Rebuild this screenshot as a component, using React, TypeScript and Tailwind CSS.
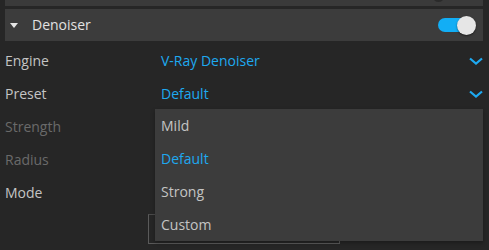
import { useState } from "react";

const rows = [
  { label: "Engine", value: "V-Ray Denoiser", dim: false, chevron: true },
  { label: "Preset", value: "Default", dim: false, chevron: true },
  { label: "Strength", value: "", dim: true, chevron: false },
  { label: "Radius", value: "", dim: true, chevron: false },
  { label: "Mode", value: "", dim: false, chevron: false },
];

const options = ["Mild", "Default", "Strong", "Custom"];

function Chevron() {
  return (
    <svg width="14" height="8" viewBox="0 0 14 8" className="shrink-0">
      <path d="M1 1.5 L7 6.5 L13 1.5" fill="none" stroke="#1ea9f0" strokeWidth="2.2" />
    </svg>
  );
}

export default function App() {
  const [on, setOn] = useState(true);
  const selected = "Default";

  return (
    <div
      className="relative w-[489px] h-[250px] overflow-hidden bg-[#262626] text-[14px] leading-none"
      style={{ fontFamily: '"Open Sans", "Noto Sans", sans-serif' }}
    >
      {/* panel above, mostly scrolled away */}
      <div className="relative mx-[5px] w-[478px] h-[6px] bg-[#3a3a3a]">
        <div className="absolute left-[428px] -top-[9px] w-[11px] h-[11px] rounded-full bg-[#2a2a2a]" />
      </div>

      {/* section header */}
      <div className="mt-[3px] ml-[5px] w-[478px] h-[32px] bg-[#3c3c3c] flex items-center">
        <svg width="8" height="5" viewBox="0 0 8 5" className="ml-[5px] mt-px">
          <path d="M0 0 H8 L4 5 Z" fill="#e6e6e6" />
        </svg>
        <span className="ml-[14px] text-[#e2e2e2]">Denoiser</span>
        <button
          onClick={() => setOn(!on)}
          className="relative ml-auto mr-[7px] w-[38px] h-[20px] flex items-center"
        >
          <span className={`absolute left-0 w-[30px] h-[14px] rounded-full ${on ? "bg-[#12aef5]" : "bg-[#666]"}`} />
          <span className="absolute right-0 w-[19px] h-[19px] rounded-full bg-[#e6e6e6] shadow-[0_1px_2px_rgba(0,0,0,0.5)]" />
        </button>
      </div>

      {/* properties */}
      <div className="mt-[3px] ml-[5px] w-[478px] flex flex-col">
        {rows.map((r) => (
          <div key={r.label} className="h-[33px] flex items-center">
            <span className={`w-[156px] ${r.dim ? "text-[#6a6a6a]" : "text-[#c4c4c4]"}`}>{r.label}</span>
            <span className="flex-1 text-[#1ea9f0]">{r.value}</span>
            {r.chevron && <Chevron />}
          </div>
        ))}
      </div>

      {/* mode select box under the open list */}
      <div className="absolute left-[148px] top-[214px] w-[192px] h-[30px] border border-[#5a5a5a] border-t-[#4a4a4a]" />

      {/* open preset list */}
      <div className="absolute left-[155px] top-[109px] w-[328px] bg-[#3c3c3c] flex flex-col shadow-[0_2px_4px_rgba(0,0,0,0.3)]">
        {options.map((o) => (
          <div
            key={o}
            className={`h-[33px] flex items-center pl-[6px] ${o === selected ? "text-[#1ea9f0]" : "text-[#c4c4c4]"}`}
          >
            {o}
          </div>
        ))}
      </div>
    </div>
  );
}
